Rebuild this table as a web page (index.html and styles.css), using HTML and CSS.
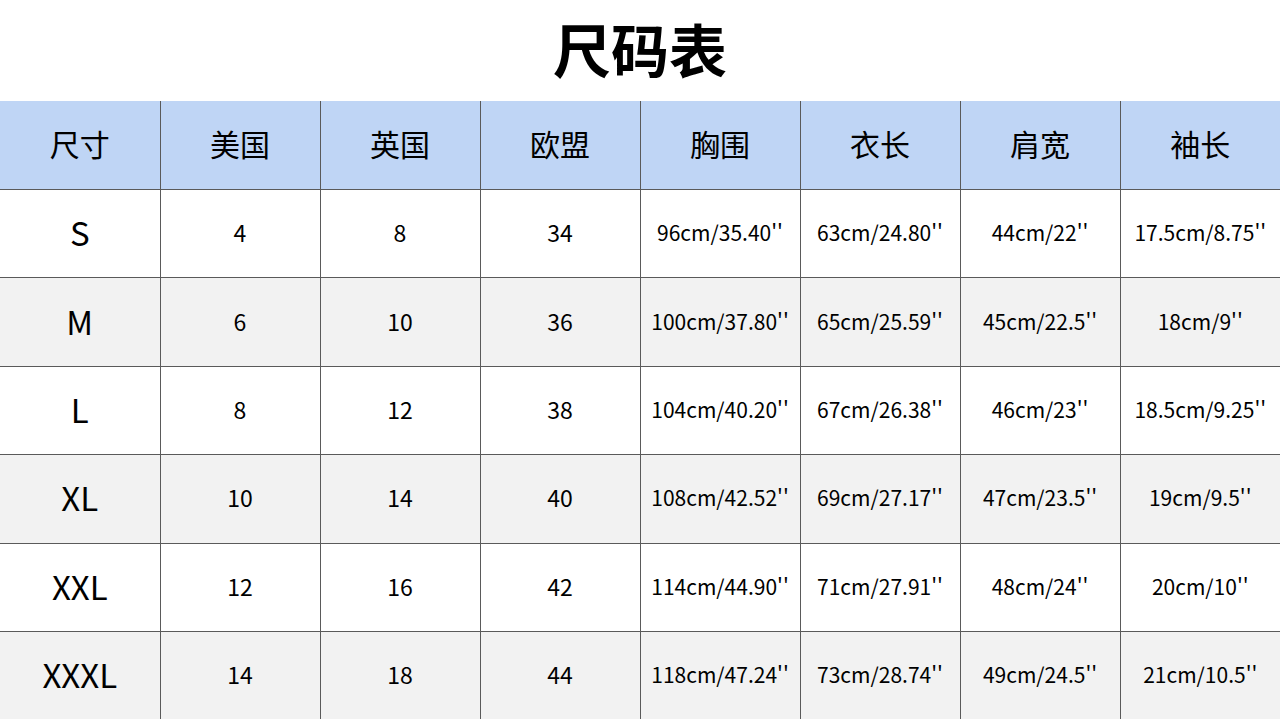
FILE: index.html
```html
<!DOCTYPE html>
<html lang="zh-CN">
<head>
<meta charset="utf-8">
<title>尺码表</title>
<link rel="stylesheet" href="styles.css">
</head>
<body>
<h1 class="title">尺码表</h1>
<table class="size-table">
  <colgroup>
    <col class="c"><col class="c"><col class="c"><col class="c"><col class="c"><col class="c"><col class="c"><col class="c">
  </colgroup>
  <thead>
    <tr class="head">
      <th>尺寸</th><th>美国</th><th>英国</th><th>欧盟</th><th>胸围</th><th>衣长</th><th>肩宽</th><th>袖长</th>
    </tr>
  </thead>
  <tbody>
    <tr class="odd"><td class="size">S</td><td class="num">4</td><td class="num">8</td><td class="num">34</td><td>96cm/35.40''</td><td>63cm/24.80''</td><td>44cm/22''</td><td>17.5cm/8.75''</td></tr>
    <tr class="even"><td class="size">M</td><td class="num">6</td><td class="num">10</td><td class="num">36</td><td>100cm/37.80''</td><td>65cm/25.59''</td><td>45cm/22.5''</td><td>18cm/9''</td></tr>
    <tr class="odd"><td class="size">L</td><td class="num">8</td><td class="num">12</td><td class="num">38</td><td>104cm/40.20''</td><td>67cm/26.38''</td><td>46cm/23''</td><td>18.5cm/9.25''</td></tr>
    <tr class="even"><td class="size">XL</td><td class="num">10</td><td class="num">14</td><td class="num">40</td><td>108cm/42.52''</td><td>69cm/27.17''</td><td>47cm/23.5''</td><td>19cm/9.5''</td></tr>
    <tr class="odd"><td class="size">XXL</td><td class="num">12</td><td class="num">16</td><td class="num">42</td><td>114cm/44.90''</td><td>71cm/27.91''</td><td>48cm/24''</td><td>20cm/10''</td></tr>
    <tr class="even"><td class="size">XXXL</td><td class="num">14</td><td class="num">18</td><td class="num">44</td><td>118cm/47.24''</td><td>73cm/28.74''</td><td>49cm/24.5''</td><td>21cm/10.5''</td></tr>
  </tbody>
</table>
</body>
</html>
```
FILE: styles.css
```css
html, body {
  margin: 0;
  padding: 0;
  background: #ffffff;
}
body {
  width: 1280px;
  height: 720px;
  overflow: hidden;
  font-family: "Noto Sans CJK SC", "Noto Sans", sans-serif;
  color: #000;
}
.title {
  margin: 0;
  height: 95px;
  padding-bottom: 6px;
  display: flex;
  align-items: center;
  justify-content: center;
  font-size: 58px;
  font-weight: 700;
  line-height: 1;
}
.size-table {
  width: 1280px;
  border-collapse: collapse;
  table-layout: fixed;
}
.size-table .c {
  width: 160px;
}
.size-table th,
.size-table td {
  height: 87.4px;
  padding: 0;
  text-align: center;
  vertical-align: middle;
  border: 1px solid #5a5a5a;
  line-height: 1;
}
.size-table tr > :first-child {
  border-left: none;
}
.size-table tr > :last-child {
  border-right: none;
}
.size-table thead th {
  border-top: none;
  background: #bfd5f5;
  font-size: 30px;
  font-weight: 400;
  height: 83px;
  padding-bottom: 5px;
}
.size-table tbody tr:last-child td {
  border-bottom: none;
}
.size-table td {
  font-size: 21px;
  height: 85.4px;
  padding-bottom: 2px;
}
.size-table td.num {
  font-size: 23px;
}
.size-table td.size {
  font-size: 33px;
}
.odd td {
  background: #ffffff;
}
.even td {
  background: #f2f2f2;
}
```
